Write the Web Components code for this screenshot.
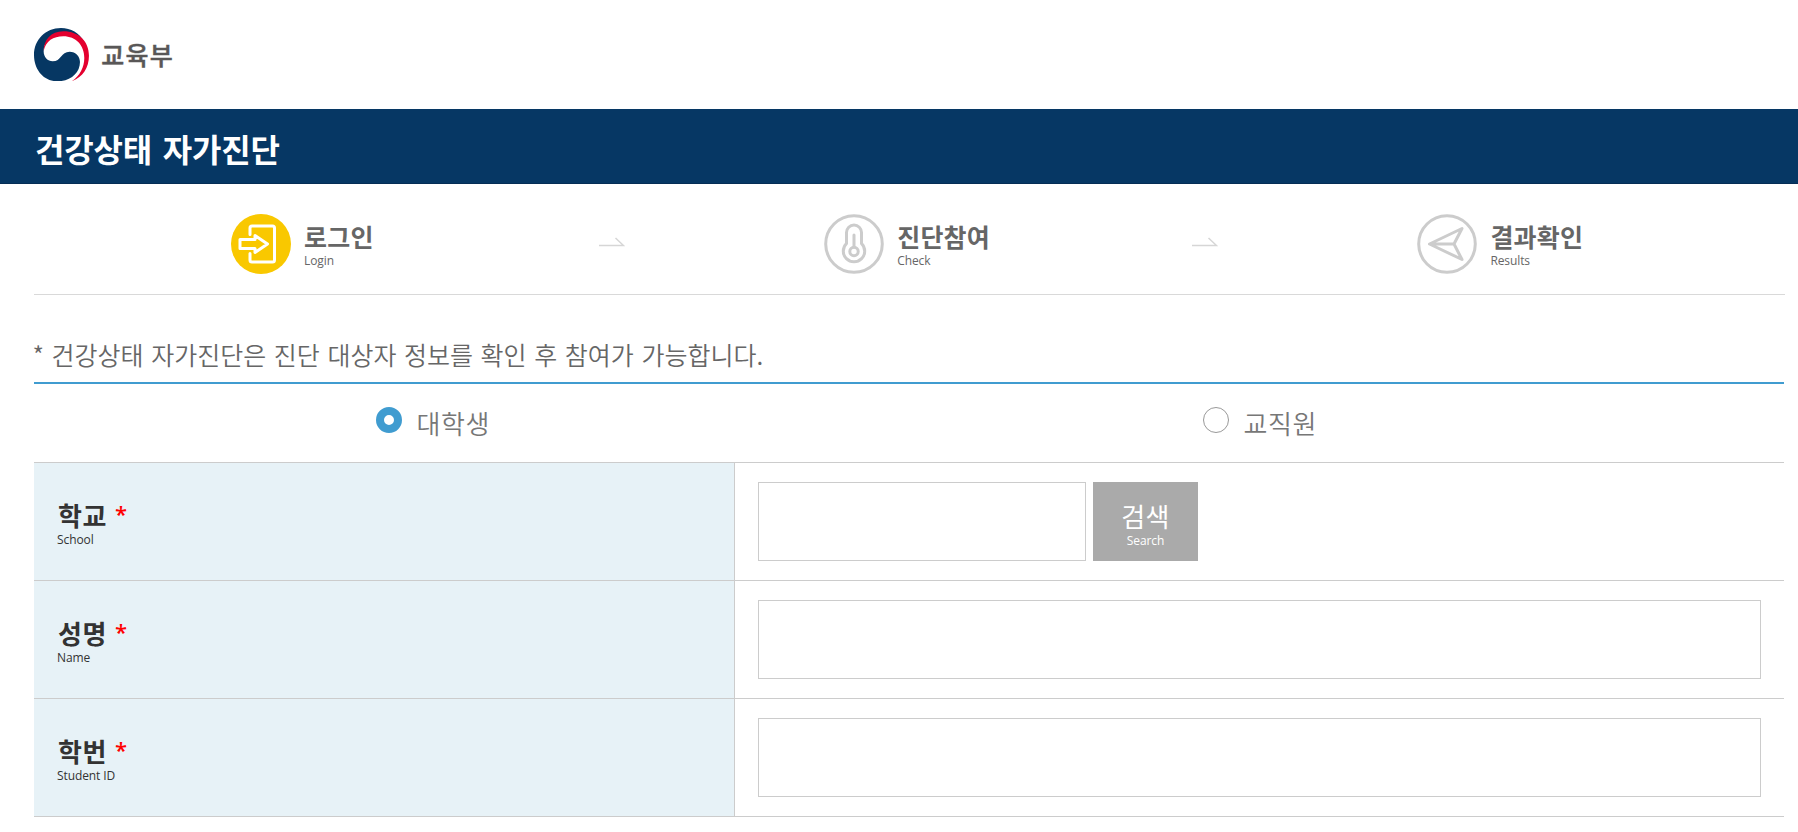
<!DOCTYPE html>
<html lang="ko">
<head>
  <meta charset="utf-8">
  <title>건강상태 자가진단</title>
  <style>
    body {
      margin: 0;
      background: #fff;
      color: #666;
      font-family: "Open Sans", "Noto Sans CJK KR", sans-serif;
      overflow: hidden;
    }
  </style>
</head>
<body>
  <self-check-page></self-check-page>

  <script>
    function attachTemplate(element, html) {
      const template = document.createElement('template');
      template.innerHTML = html;
      const root = element.attachShadow({ mode: 'open' });
      root.appendChild(template.content.cloneNode(true));
      return root;
    }

    class SiteHeader extends HTMLElement {
      constructor() {
        super();
        attachTemplate(this, `
          <style>
            :host {
              display: flex;
              align-items: center;
              box-sizing: border-box;
              height: 109px;
              padding-left: 34px;
              gap: 12px;
            }
            svg {
              display: block;
              width: 55.3px;
              height: 53.3px;
            }
            span {
              margin-bottom: 2px;
              font: 500 25px/36px "Noto Sans CJK KR", sans-serif;
              letter-spacing: 1.2px;
              color: #595757;
              -webkit-text-stroke: .5px #595757;
            }
          </style>
          <svg viewBox="42 53 166 160">
            <path fill="#063763" d="M192 94C178 68 153 53 123 53C77 53 42 88 42 134C42 179 72 213 112 213C151 213 180 188 180 155C180 137 167 124 149 124C123 124 124 153 98 153C83 153 71 141 71 123C71 94 94 69 132 67C157 66 178 75 192 94Z"/>
            <path fill="#e4002f" d="M71 122C71 89 93 63 130 63C178 63 207 95 207 136C207 173 187 201 155 213C179 197 193 172 193 143C193 105 168 78 130 78C100 78 77 92 71 122Z"/>
          </svg>
          <span><slot></slot></span>
        `);
      }
    }

    class PageTitle extends HTMLElement {
      constructor() {
        super();
        attachTemplate(this, `
          <style>
            :host {
              display: block;
              box-sizing: border-box;
              height: 75px;
              padding: 3px 0 0 35px;
              background: #063764;
              border-bottom: 1px solid #052d55;
              color: #fff;
              font: bold 32px/72px "Noto Sans CJK KR", sans-serif;
              letter-spacing: -.2px;
              word-spacing: 2px;
            }
          </style>
          <slot></slot>
        `);
      }
    }

    const stepIcons = {
      login: `
        <circle cx="30" cy="30" r="30" fill="#f9c800"/>
        <g fill="none" stroke="#fff" stroke-width="3" stroke-linejoin="round" stroke-linecap="round">
          <path d="M19 20.5V14Q19 12 21 12H41.500Q43.500 12 43.500 14V46Q43.500 48 41.500 48H21Q19 48 19 46V39.500"/>
          <path d="M9 25.500H24V21.500L36.500 30L24 38.500V34.500H9Z"/>
        </g>`,
      check: `
        <g fill="none" stroke="#ccc" stroke-width="3">
          <circle cx="30" cy="30" r="28.300"/>
          <path d="M22.500 29.500V18.500A7.500 7.500 0 0 1 37.500 18.500V29.500A10.700 10.700 0 1 1 22.500 29.500Z"/>
          <circle cx="30" cy="37.500" r="4.200"/>
          <path d="M30 33V21" stroke-linecap="round"/>
        </g>`,
      results: `
        <g fill="none" stroke="#ccc" stroke-width="3" stroke-linejoin="round">
          <circle cx="30" cy="30" r="28.300"/>
          <path d="M12.500 30L45 14.500L37 30L45 45.500ZM12.500 30H37"/>
        </g>`
    };

    class ProgressStep extends HTMLElement {
      constructor() {
        super();
        attachTemplate(this, `
          <style>
            :host {
              display: flex;
              align-items: center;
              padding-left: 196.500px;
            }
            .icon {
              width: 60px;
              height: 60px;
            }
            .label {
              margin-left: 13.500px;
              padding-top: 2px;
            }
            .ko {
              display: block;
              font: bold 25px/30px "Noto Sans CJK KR", sans-serif;
              letter-spacing: .2px;
            }
            .en {
              display: block;
              margin-top: 2px;
              font-size: 12px;
              line-height: 16px;
              letter-spacing: -.1px;
            }
            .arrow {
              display: none;
              width: 26px;
              height: 10px;
              margin: -4px 2px 0 auto;
            }
            :host([next]) .arrow {
              display: block;
            }
          </style>
          <svg class="icon" viewBox="0 0 60 60"></svg>
          <div class="label">
            <span class="ko"><slot></slot></span>
            <span class="en"><slot name="en"></slot></span>
          </div>
          <svg class="arrow" viewBox="0 0 26 10">
            <path d="M0 8.500H24.500L16.500 1" fill="none" stroke="#d6d6d6" stroke-width="1.500"/>
          </svg>
        `);
      }

      connectedCallback() {
        this.shadowRoot.querySelector('.icon').innerHTML = stepIcons[this.getAttribute('icon')];
      }
    }

    class ProgressSteps extends HTMLElement {
      constructor() {
        super();
        attachTemplate(this, `
          <style>
            :host {
              display: grid;
              grid-template-columns: 593.2px 593.2px 1fr;
              box-sizing: border-box;
              height: 111px;
              width: 1751px;
              margin-left: 34px;
              padding-top: 9px;
              border-bottom: 1px solid #d9d9d9;
            }
          </style>
          <slot></slot>
        `);
      }
    }

    class UserTypeOption extends HTMLElement {
      constructor() {
        super();
        attachTemplate(this, `
          <style>
            :host {
              display: flex;
              align-items: flex-start;
              padding: 23px 0 0 342px;
            }
            i {
              box-sizing: border-box;
              width: 26px;
              height: 26px;
              border: 1px solid #999;
              border-radius: 50%;
              background: #fff;
            }
            :host([checked]) i {
              border: 8px solid #409cd0;
            }
            span {
              margin: -1px 0 0 14.500px;
              font: 26px/34px "Noto Sans CJK KR", sans-serif;
              font-weight: 350;
              letter-spacing: .6px;
              color: #777;
            }
          </style>
          <i></i>
          <span><slot></slot></span>
        `);
      }
    }

    class FormRow extends HTMLElement {
      constructor() {
        super();
        attachTemplate(this, `
          <style>
            :host {
              display: grid;
              grid-template-columns: 701px 1fr;
              height: 117px;
              border-bottom: 1px solid #ccc;
            }
            .label {
              box-sizing: border-box;
              padding: 35px 0 0 23px;
              background: #e7f2f7;
              border-right: 1px solid #ccc;
              color: #333;
            }
            .ko {
              display: flex;
              gap: 8px;
              padding-left: 1px;
              font: bold 26px/34px "Noto Sans CJK KR", sans-serif;
              letter-spacing: .6px;
            }
            .ko b {
              color: #f00;
              font: 600 22px/30px "Open Sans", sans-serif;
            }
            .en {
              font-size: 12px;
              line-height: 16px;
              letter-spacing: -.1px;
            }
            .field {
              display: flex;
              gap: 7px;
              padding: 19px 23px;
            }
          </style>
          <div class="label">
            <div class="ko"><slot name="ko"></slot><b>*</b></div>
            <div class="en"><slot name="en"></slot></div>
          </div>
          <div class="field"><slot></slot></div>
        `);
      }
    }

    class TextField extends HTMLElement {
      constructor() {
        super();
        attachTemplate(this, `
          <style>
            :host {
              display: block;
              flex: 1;
            }
            :host([short]) {
              flex: 0 0 328px;
            }
            input {
              display: block;
              box-sizing: border-box;
              width: 100%;
              height: 79px;
              padding: 0 20px;
              border: 1px solid #ccc;
              background: #fff;
              font: inherit;
              font-size: 25px;
            }
          </style>
          <input type="text">
        `);
      }
    }

    class SearchButton extends HTMLElement {
      constructor() {
        super();
        attachTemplate(this, `
          <style>
            :host {
              display: block;
              width: 105px;
            }
            button {
              display: block;
              box-sizing: border-box;
              width: 100%;
              height: 79px;
              padding: 4px 0 0;
              border: 0;
              background: #aaa;
              color: #fff;
              font-family: inherit;
            }
            .ko {
              display: block;
              font: 26px/34px "Noto Sans CJK KR", sans-serif;
              letter-spacing: .3px;
            }
            .en {
              display: block;
              font-size: 12px;
              line-height: 16px;
              letter-spacing: -.1px;
            }
          </style>
          <button type="button">
            <span class="ko"><slot></slot></span>
            <span class="en"><slot name="en"></slot></span>
          </button>
        `);
      }
    }

    class SelfCheckPage extends HTMLElement {
      constructor() {
        super();
        attachTemplate(this, `
          <style>
            :host {
              display: block;
              height: 832px;
            }
            .notice {
              box-sizing: border-box;
              height: 89px;
              margin: 0 14px 0 34px;
              padding-top: 40px;
              border-bottom: 2px solid #409cd0;
              font: 25px/38px "Noto Sans CJK KR", sans-serif;
              font-weight: 350;
              text-indent: -1.500px;
              word-spacing: .6px;
            }
            .types {
              display: grid;
              grid-template-columns: 827px 1fr;
              height: 78px;
              margin: 0 14px 0 34px;
              border-bottom: 1px solid #ccc;
            }
            form {
              margin: 0 14px 0 34px;
            }
          </style>
          <site-header>교육부</site-header>
          <page-title>건강상태 자가진단</page-title>
          <progress-steps>
            <progress-step icon="login" next>로그인<span slot="en">Login</span></progress-step>
            <progress-step icon="check" next>진단참여<span slot="en">Check</span></progress-step>
            <progress-step icon="results">결과확인<span slot="en">Results</span></progress-step>
          </progress-steps>
          <div class="notice">* 건강상태 자가진단은 진단 대상자 정보를 확인 후 참여가 가능합니다.</div>
          <div class="types">
            <user-type-option checked>대학생</user-type-option>
            <user-type-option>교직원</user-type-option>
          </div>
          <form>
            <form-row>
              <span slot="ko">학교</span><span slot="en">School</span>
              <text-field short></text-field>
              <search-button>검색<span slot="en">Search</span></search-button>
            </form-row>
            <form-row>
              <span slot="ko">성명</span><span slot="en">Name</span>
              <text-field></text-field>
            </form-row>
            <form-row>
              <span slot="ko">학번</span><span slot="en">Student ID</span>
              <text-field></text-field>
            </form-row>
          </form>
        `);
      }
    }

    customElements.define('site-header', SiteHeader);
    customElements.define('page-title', PageTitle);
    customElements.define('progress-step', ProgressStep);
    customElements.define('progress-steps', ProgressSteps);
    customElements.define('user-type-option', UserTypeOption);
    customElements.define('form-row', FormRow);
    customElements.define('text-field', TextField);
    customElements.define('search-button', SearchButton);
    customElements.define('self-check-page', SelfCheckPage);
  </script>
</body>
</html>
